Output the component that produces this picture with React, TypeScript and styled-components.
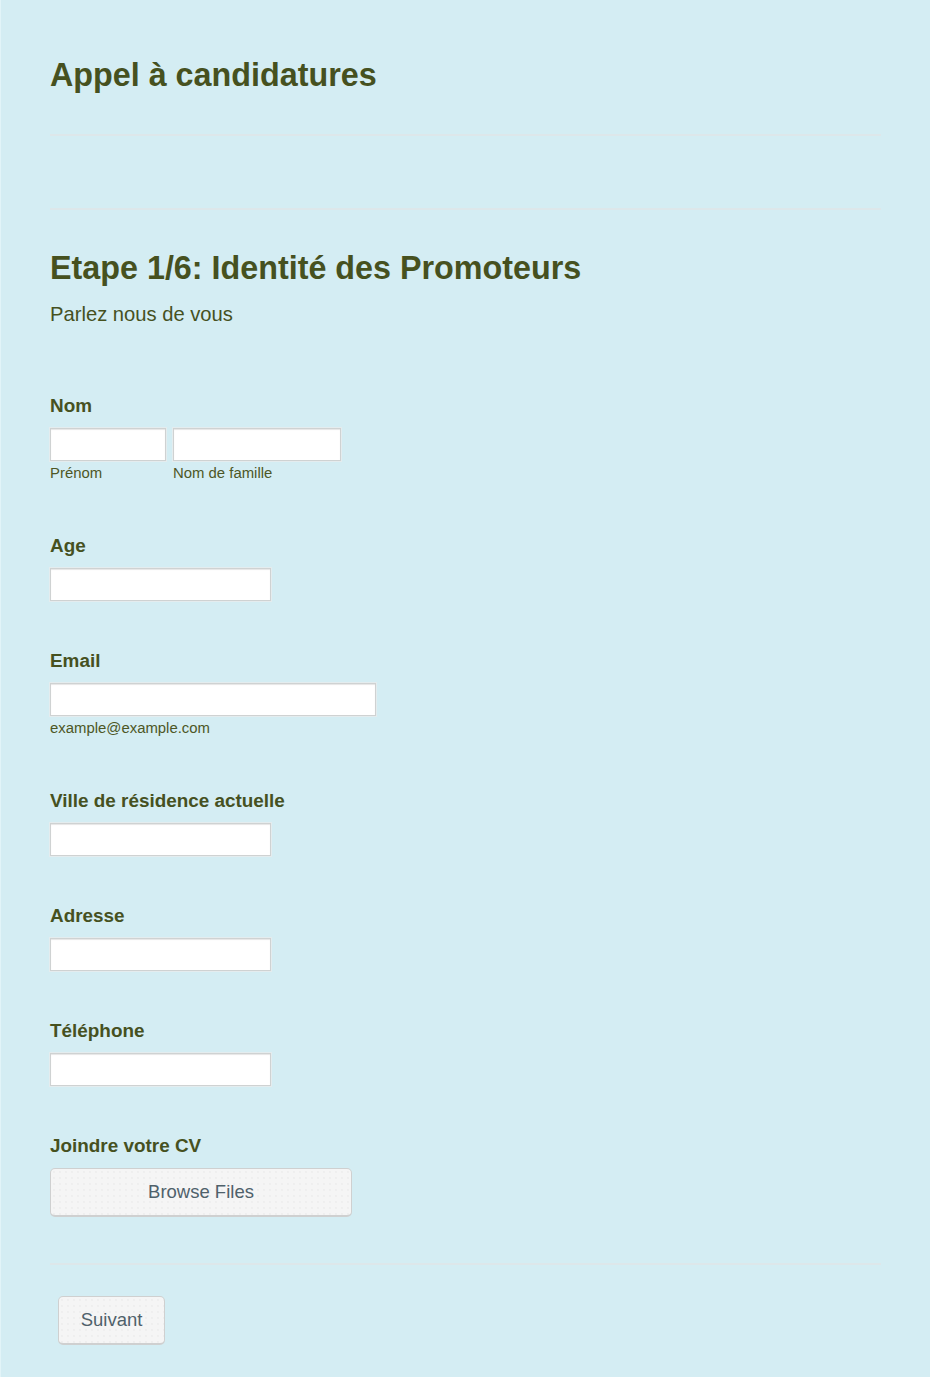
import React from "react";
import styled, { createGlobalStyle } from "styled-components";

const Global = createGlobalStyle`
  html, body { margin: 0; padding: 0; background: #d4edf3; }
  body { font-family: "Liberation Sans", Arial, sans-serif; color: #46511f; }
  * { box-sizing: border-box; }
`;

const Page = styled.div`
  min-height: 1377px;
  background: #d4edf3;
  border-left: 1px solid #e2f4f8;
  padding: 0 49px 33px 49px;
`;

const TopSection = styled.header`
  padding-top: 56px;
`;

const Title = styled.h1`
  margin: 0;
  font-size: 32.3px;
  line-height: 38px;
  font-weight: 700;
  color: #46511f;
`;

const Rule = styled.hr<{ $top: number }>`
  border: 0;
  height: 2px;
  background: #dde7ea;
  margin: ${(p) => p.$top}px 0 0 0;
`;

const StepHeading = styled.h2`
  margin: 39px 0 0 0;
  font-size: 32.3px;
  line-height: 38px;
  font-weight: 700;
  color: #46511f;
`;

const Subtitle = styled.p`
  margin: 15px 0 0 0;
  font-size: 20.2px;
  line-height: 24px;
  color: #46511f;
`;

const Form = styled.form`
  margin-top: 68px;
  display: flex;
  flex-direction: column;
`;

const Field = styled.div<{ $gap: number }>`
  display: flex;
  flex-direction: column;
  margin-bottom: ${(p) => p.$gap}px;
`;

const Label = styled.label`
  font-size: 18.9px;
  line-height: 23px;
  font-weight: 700;
  color: #46511f;
  margin-bottom: 11px;
`;

const Row = styled.div`
  display: flex;
  gap: 7px;
`;

const Col = styled.div`
  display: flex;
  flex-direction: column;
`;

const Input = styled.input<{ $w: number }>`
  width: ${(p) => p.$w}px;
  height: 33px;
  border: 1px solid #cfd2d2;
  box-shadow: inset 0 1px 1px #e6e6e6, 0 0 0 1px #e4ecee;
  background: #ffffff;
  margin: 0;
  padding: 0 6px;
  outline: none;
  font-family: inherit;
`;

const SubLabel = styled.span`
  font-size: 14.9px;
  line-height: 18px;
  margin-top: 3px;
  color: #4d5726;
`;

const Button = styled.button<{ $w: number }>`
  width: ${(p) => p.$w}px;
  height: 49px;
  border: 1px solid #cfd0d0;
  border-bottom-width: 2px;
  border-radius: 5px;
  background-color: #f5f5f5;
  background-image: radial-gradient(#e6e6e6 0.6px, transparent 0.8px);
  background-size: 6px 6px;
  font-family: "Liberation Sans", Arial, sans-serif;
  font-size: 18.5px;
  color: #4f616b;
  cursor: pointer;
  padding: 0;
`;

const Footer = styled.div`
  padding: 31px 0 0 8px;
`;

export default function App() {
  return (
    <>
      <Global />
      <Page>
        <TopSection>
          <Title>Appel à candidatures</Title>
        </TopSection>
        <Rule $top={40} />
        <Rule $top={72} />
        <StepHeading>Etape 1/6: Identité des Promoteurs</StepHeading>
        <Subtitle>Parlez nous de vous</Subtitle>
        <Form onSubmit={(e) => e.preventDefault()}>
          <Field $gap={52}>
            <Label>Nom</Label>
            <Row>
              <Col>
                <Input $w={116} />
                <SubLabel>Prénom</SubLabel>
              </Col>
              <Col>
                <Input $w={168} />
                <SubLabel>Nom de famille</SubLabel>
              </Col>
            </Row>
          </Field>
          <Field $gap={48}>
            <Label>Age</Label>
            <Input $w={221} />
          </Field>
          <Field $gap={52}>
            <Label>Email</Label>
            <Input $w={326} />
            <SubLabel>example@example.com</SubLabel>
          </Field>
          <Field $gap={48}>
            <Label>Ville de résidence actuelle</Label>
            <Input $w={221} />
          </Field>
          <Field $gap={48}>
            <Label>Adresse</Label>
            <Input $w={221} />
          </Field>
          <Field $gap={48}>
            <Label>Téléphone</Label>
            <Input $w={221} />
          </Field>
          <Field $gap={0}>
            <Label>Joindre votre CV</Label>
            <Button type="button" $w={302}>Browse Files</Button>
          </Field>
        </Form>
        <Rule $top={46} />
        <Footer>
          <Button type="button" $w={107}>Suivant</Button>
        </Footer>
      </Page>
    </>
  );
}
